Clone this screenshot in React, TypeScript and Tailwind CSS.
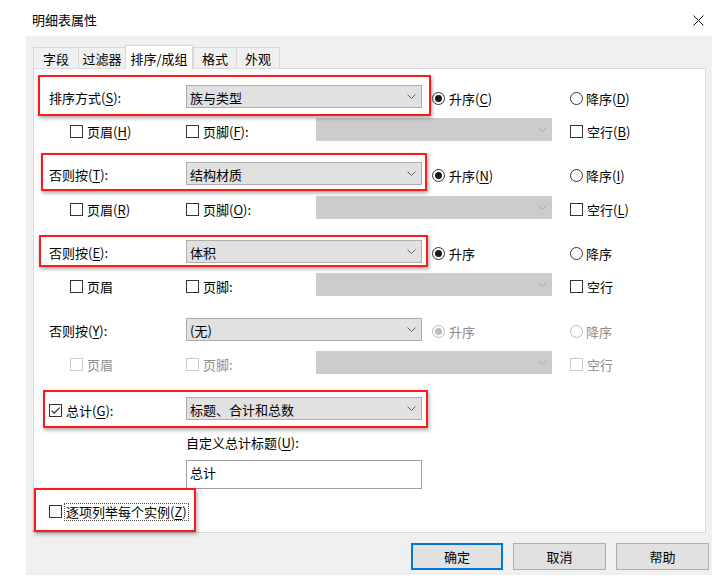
import React from "react";

function Check({ checked = false, disabled = false }: { checked?: boolean; disabled?: boolean }) {
  return (
    <span
      className={`inline-flex h-[13px] w-[13px] shrink-0 items-center justify-center border bg-white ${
        disabled ? "border-[#cccccc]" : "border-[#333333]"
      }`}
    >
      {checked && (
        <svg width="11" height="11" viewBox="0 0 11 11">
          <path d="M1.6 5.6 L4.2 8.2 L9.6 2.6" fill="none" stroke="#222222" strokeWidth="1.1" />
        </svg>
      )}
    </span>
  );
}

function Radio({ checked = false, disabled = false }: { checked?: boolean; disabled?: boolean }) {
  return (
    <span
      className={`inline-flex h-[13px] w-[13px] shrink-0 items-center justify-center rounded-full border bg-white ${
        disabled ? "border-[#bcbcbc]" : "border-[#333333]"
      }`}
    >
      {checked && (
        <span className={`h-[7px] w-[7px] rounded-full ${disabled ? "bg-[#bcbcbc]" : "bg-[#1a1a1a]"}`} />
      )}
    </span>
  );
}

function Select({ value = "", disabled = false }: { value?: string; disabled?: boolean }) {
  return (
    <div
      className={`flex h-[23px] w-[236px] shrink-0 items-center justify-between pl-[3px] pr-[5px] ${
        disabled ? "bg-[#cccccc]" : "border border-[#adadad] bg-[#e1e1e1]"
      }`}
    >
      <span className="mt-[2px]">{value}</span>
      <svg width="9" height="5" viewBox="0 0 9 5">
        <path d="M0.5 0.5 L4.5 4.5 L8.5 0.5" fill="none" stroke={disabled ? "#a8a8a8" : "#606060"} />
      </svg>
    </div>
  );
}

function U({ c }: { c: string }) {
  return <u className="decoration-1 underline-offset-[2px]">{c}</u>;
}

function MainRow({
  label,
  value,
  asc,
  desc,
  disabledRadios = false,
}: {
  label: React.ReactNode;
  value: string;
  asc: React.ReactNode;
  desc: React.ReactNode;
  disabledRadios?: boolean;
}) {
  const tc = disabledRadios ? "text-[#8c8c8c]" : "";
  return (
    <div className="flex h-[23px] items-center">
      <div className="mt-[3px] w-[152px] shrink-0 pl-[15px]">{label}</div>
      <Select value={value} />
      <div className="ml-[10px] mt-[4px] flex w-[138px] shrink-0 items-center gap-[4px]">
        <Radio checked disabled={disabledRadios} />
        <span className={tc}>{asc}</span>
      </div>
      <div className="mt-[4px] flex items-center gap-[3px]">
        <Radio disabled={disabledRadios} />
        <span className={tc}>{desc}</span>
      </div>
    </div>
  );
}

function SubRow({
  h,
  f,
  b,
  disabled = false,
}: {
  h: React.ReactNode;
  f: React.ReactNode;
  b: React.ReactNode;
  disabled?: boolean;
}) {
  const tc = disabled ? "text-[#8c8c8c]" : "";
  return (
    <div className="flex h-[23px] items-center">
      <div className="ml-[36px] mt-[4px] flex w-[116px] shrink-0 items-center gap-[4px]">
        <Check disabled={disabled} />
        <span className={tc}>{h}</span>
      </div>
      <div className="mt-[4px] flex w-[130px] shrink-0 items-center gap-[4px]">
        <Check disabled={disabled} />
        <span className={tc}>{f}</span>
      </div>
      <Select disabled />
      <div className="ml-[18px] mt-[4px] flex items-center gap-[4px]">
        <Check disabled={disabled} />
        <span className={tc}>{b}</span>
      </div>
    </div>
  );
}

function RedBox({ cls }: { cls: string }) {
  return (
    <div
      className={`pointer-events-none absolute border-2 border-[#ff1a1a] shadow-[1px_2px_4px_rgba(0,0,0,0.35)] ${cls}`}
    />
  );
}

export default function App() {
  const tabs = [
    { t: "字段", w: "w-[45px]" },
    { t: "过滤器", w: "w-[47px]" },
    { t: "排序/成组", w: "w-[68px]", active: true },
    { t: "格式", w: "w-[43px]" },
    { t: "外观", w: "w-[44px]" },
  ];
  return (
    <div className="h-[581px] w-[728px] overflow-hidden bg-white font-['Noto_Sans_CJK_SC',sans-serif] text-[13px] leading-[16px] text-black">
      {/* title bar */}
      <div className="flex h-[36px] items-center justify-between pl-[32px] pr-[24px] pt-[4px]">
        <span>明细表属性</span>
        <svg width="11" height="11" viewBox="0 0 11 11">
          <path d="M0.5 0.5 L10.5 10.5 M10.5 0.5 L0.5 10.5" stroke="#111111" strokeWidth="1" />
        </svg>
      </div>

      {/* body */}
      <div className="ml-[26px] h-[539px] w-[686px] bg-[#f0f0f0] pl-[7px] pt-[9px]">
        {/* tabs */}
        <div className="flex h-[23px] items-end">
          {tabs.map((tb, i) =>
            tb.active ? (
              <div
                key={i}
                className={`relative z-10 -mb-px flex h-[24px] ${tb.w} shrink-0 items-center justify-center border border-b-0 border-[#d9d9d9] bg-white pt-[2px]`}
              >
                {tb.t}
              </div>
            ) : (
              <div
                key={i}
                className={`flex h-[21px] ${tb.w} shrink-0 items-center justify-center border-l border-t border-[#d9d9d9] bg-[#f0f0f0] pt-[2px] ${
                  i === tabs.length - 1 ? "border-r" : ""
                }`}
              >
                {tb.t}
              </div>
            )
          )}
        </div>

        {/* panel */}
        <div className="relative h-[465px] w-[673px] border border-[#d9d9d9] bg-white pt-[16px]">
          <MainRow
            label={<>排序方式(<U c="S" />):</>}
            value="族与类型"
            asc={<>升序(<U c="C" />)</>}
            desc={<>降序(<U c="D" />)</>}
          />
          <div className="mt-[10px]">
            <SubRow h={<>页眉(<U c="H" />)</>} f={<>页脚(<U c="F" />):</>} b={<>空行(<U c="B" />)</>} />
          </div>
          <div className="mt-[21px]">
            <MainRow
              label={<>否则按(<U c="T" />):</>}
              value="结构材质"
              asc={<>升序(<U c="N" />)</>}
              desc={<>降序(<U c="I" />)</>}
            />
          </div>
          <div className="mt-[11px]">
            <SubRow h={<>页眉(<U c="R" />)</>} f={<>页脚(<U c="O" />):</>} b={<>空行(<U c="L" />)</>} />
          </div>
          <div className="mt-[21px]">
            <MainRow label={<>否则按(<U c="E" />):</>} value="体积" asc="升序" desc="降序" />
          </div>
          <div className="mt-[10px]">
            <SubRow h="页眉" f="页脚:" b="空行" />
          </div>
          <div className="mt-[22px]">
            <MainRow label={<>否则按(<U c="Y" />):</>} value="(无)" asc="升序" desc="降序" disabledRadios />
          </div>
          <div className="mt-[10px]">
            <SubRow h="页眉" f="页脚:" b="空行" disabled />
          </div>
          <div className="mt-[23px] flex h-[23px] items-center">
            <div className="mt-[4px] flex w-[152px] shrink-0 items-center gap-[4px] pl-[15px]">
              <Check checked />
              <span>
                总计(<U c="G" />):
              </span>
            </div>
            <Select value="标题、合计和总数" />
          </div>
          <div className="ml-[152px] mt-[15px] h-[16px]">
            自定义总计标题(<U c="U" />):
          </div>
          <div className="ml-[152px] mt-[9px] h-[29px] w-[236px] border border-[#a0a0a0] pl-[3px] pt-[4px]">
            总计
          </div>
          <div className="ml-[15px] mt-[13px] flex h-[19px] items-center gap-[2px]">
            <Check />
            <span className="border border-dotted border-[#555555] px-px leading-[16px]">
              逐项列举每个实例(<U c="Z" />)
            </span>
          </div>

          <RedBox cls="left-[4px] top-[6px] h-[41px] w-[393px]" />
          <RedBox cls="left-[7px] top-[84px] h-[38px] w-[386px]" />
          <RedBox cls="left-[5px] top-[166px] h-[32px] w-[389px]" />
          <RedBox cls="left-[9px] top-[321px] h-[38px] w-[385px]" />
          <RedBox cls="left-[0px] top-[419px] h-[44px] w-[162px]" />
        </div>

        {/* buttons */}
        <div className="mt-[10px] flex justify-end gap-[10px] pr-[3px]">
          <button className="h-[27px] w-[92px] border-2 border-[#0078d7] bg-[#e1e1e1]">确定</button>
          <button className="h-[27px] w-[93px] border border-[#adadad] bg-[#e1e1e1]">取消</button>
          <button className="h-[27px] w-[93px] border border-[#adadad] bg-[#e1e1e1]">帮助</button>
        </div>
      </div>
    </div>
  );
}
